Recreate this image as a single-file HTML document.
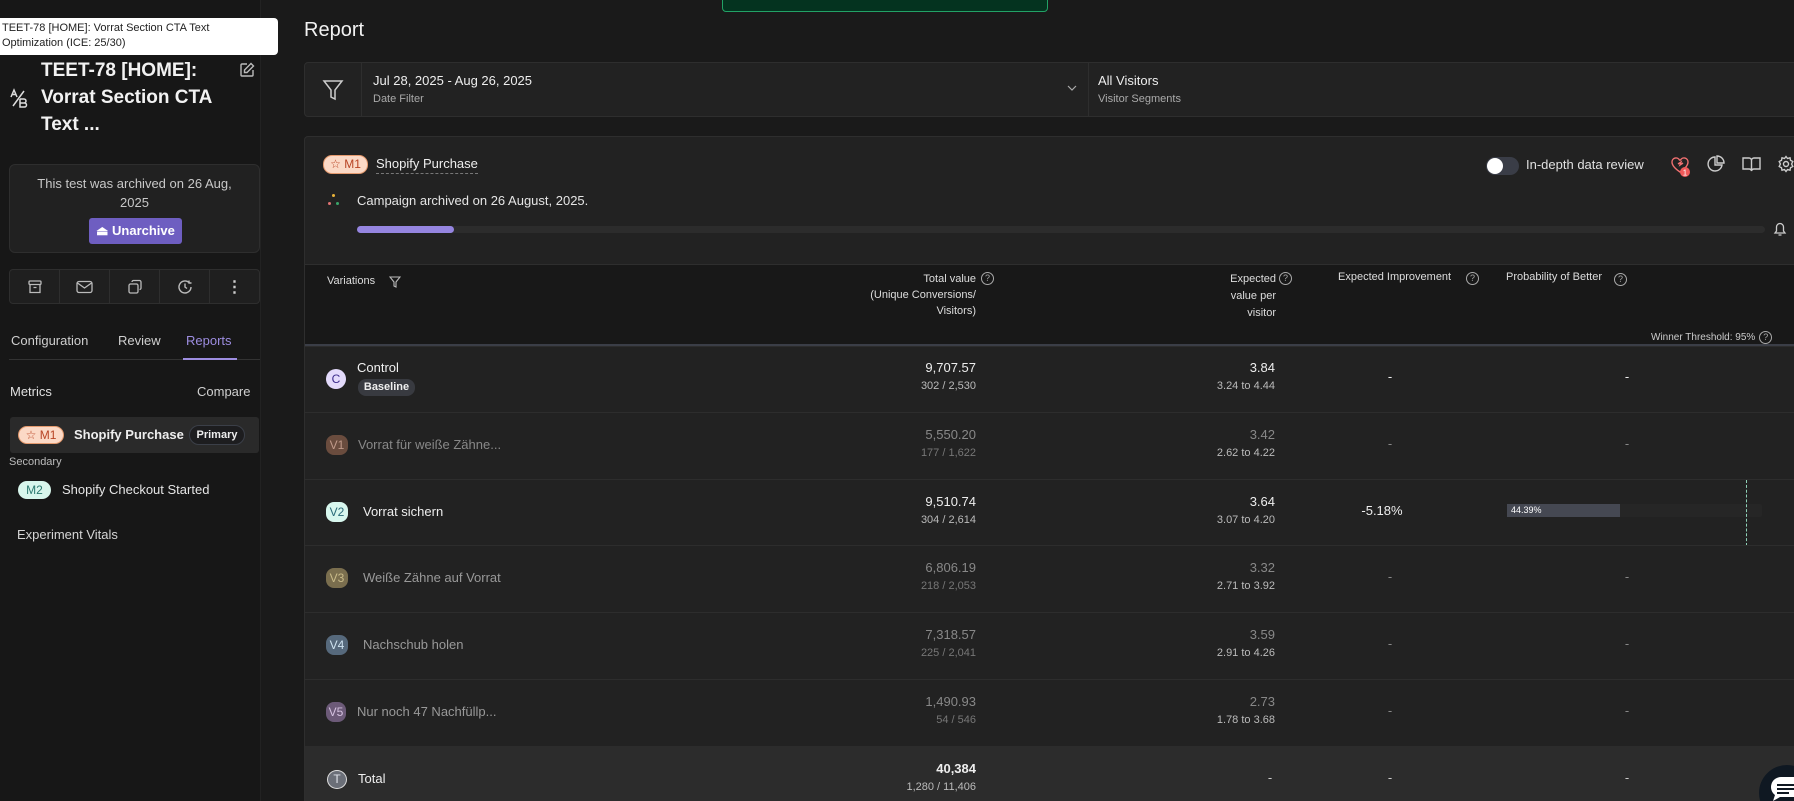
<!DOCTYPE html>
<html><head><meta charset="utf-8"><style>
*{box-sizing:border-box;margin:0;padding:0}
html,body{width:1794px;height:801px;overflow:hidden;background:#1a1a1a;font-family:"Liberation Sans",sans-serif;color:#e8e8e8}
#root{position:relative;width:1794px;height:801px;overflow:hidden}
.a{position:absolute}
.side{position:absolute;left:0;top:0;width:261px;height:801px;background:#171717;border-right:1px solid #222}
.t{white-space:nowrap}
.badge{position:absolute;width:22px;height:20px;border-radius:8px;font-size:12px;line-height:20px;text-align:center}
.r{position:absolute;text-align:right;white-space:nowrap}
.c{position:absolute;text-align:center;white-space:nowrap}
.q{display:inline-block;width:13px;height:13px;border:1px solid #aaa;border-radius:50%;font-size:9px;line-height:11px;text-align:center;color:#aaa;vertical-align:middle;margin-left:4px}
.qa{position:absolute;width:13px;height:13px;border:1px solid #aaa;border-radius:50%;font-size:9px;line-height:11px;text-align:center;color:#aaa}
.row{position:absolute;left:305px;width:1489px;height:67px;border-top:1px solid #2d2d2d;background:#222}
</style></head><body><div id="root">

<!-- SIDEBAR -->
<div class="side">
  <div class="a t" style="left:41px;top:57px;font-size:19px;font-weight:bold;line-height:27px;color:#f2f2f2">TEET-78 [HOME]:<br>Vorrat Section CTA<br>Text ...</div>
  <svg class="a" style="left:9px;top:88px" width="20" height="20" viewBox="0 0 20 20" fill="none" stroke="#ddd" stroke-width="1.5"><path d="M2 9 L5 2 L8 9 M3 6.5h4 M15 3 L4 18 M11 11h4a2 2 0 010 4h-4v-4 M11 15h4.5a2 2 0 010 4H11v-4"/></svg>
  <svg class="a" style="left:239px;top:62px" width="16" height="16" viewBox="0 0 16 16" fill="none" stroke="#bbb" stroke-width="1.4"><path d="M8 2H3a1 1 0 00-1 1v10a1 1 0 001 1h10a1 1 0 001-1V8 M12 1.5l2.5 2.5L8 10.5H5.5V8z"/></svg>

  <div class="a" style="left:9px;top:164px;width:251px;height:89px;background:#212121;border:1px solid #2e2e2e;border-radius:6px">
    <div class="c" style="left:0;width:249px;top:9px;font-size:13px;line-height:19px;color:#c8c8c8;white-space:normal;padding:0 18px">This test was archived on 26 Aug, 2025</div>
    <div class="a" style="left:79px;top:53px;width:93px;height:26px;background:#6e5ec1;border-radius:3px;font-size:13px;font-weight:bold;line-height:26px;color:#fff;text-align:center">⏏ Unarchive</div>
  </div>

  <div class="a" style="left:9px;top:269px;width:251px;height:35px;background:#1f1f1f;border:1px solid #2e2e2e;border-radius:4px;display:flex">
    <div style="flex:1;border-right:1px solid #2e2e2e;display:flex;align-items:center;justify-content:center"><svg width="16" height="16" viewBox="0 0 16 16" fill="none" stroke="#bbb" stroke-width="1.3"><rect x="2" y="2" width="12" height="3.5" rx="1"/><path d="M3 5.5v8h10v-8 M6.5 8.5h3"/></svg></div>
    <div style="flex:1;border-right:1px solid #2e2e2e;display:flex;align-items:center;justify-content:center"><svg width="17" height="14" viewBox="0 0 17 14" fill="none" stroke="#bbb" stroke-width="1.3"><rect x="1" y="1.5" width="15" height="11" rx="2"/><path d="M1.5 3l7 5 7-5"/></svg></div>
    <div style="flex:1;border-right:1px solid #2e2e2e;display:flex;align-items:center;justify-content:center"><svg width="16" height="16" viewBox="0 0 16 16" fill="none" stroke="#bbb" stroke-width="1.3"><rect x="2" y="5" width="9" height="9" rx="1.5"/><path d="M5 3a1.5 1.5 0 011.5-1.5h6A1.5 1.5 0 0114 3v6a1.5 1.5 0 01-1.5 1.5"/></svg></div>
    <div style="flex:1;border-right:1px solid #2e2e2e;display:flex;align-items:center;justify-content:center"><svg width="16" height="16" viewBox="0 0 16 16" fill="none" stroke="#bbb" stroke-width="1.4"><path d="M14 8a6 6 0 11-2-4.5 M8 4.5V8l2 1.5 M12 1.5v2.5h2.5"/></svg></div>
    <div style="flex:1;display:flex;align-items:center;justify-content:center;color:#ccc;font-size:16px;font-weight:bold">⋮</div>
  </div>

  <div class="a t" style="left:11px;top:333px;font-size:13px;color:#cfcfcf">Configuration</div>
  <div class="a t" style="left:118px;top:333px;font-size:13px;color:#cfcfcf">Review</div>
  <div class="a t" style="left:186px;top:333px;font-size:13px;color:#9d8de0">Reports</div>
  <div class="a" style="left:9px;top:359px;width:251px;height:1px;background:#333"></div>
  <div class="a" style="left:183px;top:358px;width:54px;height:2px;background:#9d8de0"></div>

  <div class="a t" style="left:10px;top:384px;font-size:13px;color:#e0e0e0">Metrics</div>
  <div class="a t" style="left:197px;top:384px;font-size:13px;color:#d0d0d0">Compare</div>

  <div class="a" style="left:10px;top:417px;width:249px;height:36px;background:#2a2a2a;border-radius:3px"></div>
  <div class="a t" style="left:18px;top:426px;width:46px;height:18px;border-radius:9px;background:#fbd9c6;border:1px solid #e59a6e;color:#b84424;font-size:12px;line-height:16px;text-align:center">☆ M1</div>
  <div class="a t" style="left:74px;top:426px;font-size:13px;font-weight:bold;color:#eee;line-height:18px">Shopify Purchase</div>
  <div class="a t" style="left:189px;top:425px;width:56px;height:20px;border-radius:10px;border:1px solid #3b3f48;background:#1d1d1f;color:#eee;font-size:11px;font-weight:bold;line-height:18px;text-align:center">Primary</div>

  <div class="a t" style="left:9px;top:456px;font-size:11px;color:#bbb">Secondary</div>
  <div class="a t" style="left:18px;top:481px;width:33px;height:18px;border-radius:9px;background:#d8f6ec;color:#2c7a70;font-size:12px;line-height:18px;text-align:center">M2</div>
  <div class="a t" style="left:62px;top:481px;font-size:13px;color:#e5e5e5;line-height:18px">Shopify Checkout Started</div>
  <div class="a t" style="left:17px;top:527px;font-size:13px;color:#d5d5d5">Experiment Vitals</div>
</div>

<!-- tooltip -->
<div class="a" style="left:0;top:18px;width:278px;height:37px;background:#fff;border-radius:0 4px 4px 0;color:#222;font-size:11px;line-height:15px;padding:3px 2px">TEET-78 [HOME]: Vorrat Section CTA Text<br>Optimization (ICE: 25/30)</div>

<!-- toast -->
<div class="a" style="left:722px;top:-4px;width:326px;height:16px;background:#04331f;border:1px solid #22a266;border-radius:4px"></div>

<!-- main -->
<div class="a t" style="left:304px;top:19px;font-size:20px;color:#f2f2f2">Report</div>

<div class="a" style="left:304px;top:62px;width:1500px;height:55px;background:#222;border:1px solid #2e2e2e;border-radius:4px"></div>
<div class="a" style="left:361px;top:63px;width:1px;height:53px;background:#2e2e2e"></div>
<div class="a" style="left:1088px;top:63px;width:1px;height:53px;background:#2e2e2e"></div>
<svg class="a" style="left:322px;top:79px" width="22" height="22" viewBox="0 0 22 22" fill="none" stroke="#ccc" stroke-width="1.5"><path d="M2 2h18l-7 9v9l-4-2v-7z"/></svg>
<div class="a t" style="left:373px;top:73px;font-size:13px;color:#eee">Jul 28, 2025 - Aug 26, 2025</div>
<div class="a t" style="left:373px;top:93px;font-size:11px;color:#aaa">Date Filter</div>
<svg class="a" style="left:1067px;top:85px" width="10" height="7" viewBox="0 0 10 7" fill="none" stroke="#aaa" stroke-width="1.2"><path d="M1 1l4 4 4-4"/></svg>
<div class="a t" style="left:1098px;top:73px;font-size:13px;color:#eee">All Visitors</div>
<div class="a t" style="left:1098px;top:93px;font-size:11px;color:#aaa">Visitor Segments</div>

<!-- card -->
<div class="a" style="left:304px;top:136px;width:1500px;height:665px;background:#222;border:1px solid #2e2e2e;border-bottom:none;border-radius:4px 4px 0 0"></div>
<div class="a t" style="left:323px;top:155px;width:45px;height:19px;border-radius:9px;background:#fbd9c6;border:1px solid #e59a6e;color:#b84424;font-size:12px;line-height:17px;text-align:center">☆ M1</div>
<div class="a t" style="left:376px;top:155px;font-size:13px;color:#eee;line-height:18px;border-bottom:1px dashed #777">Shopify Purchase</div>

<div class="a" style="left:1486px;top:157px;width:33px;height:18px;border-radius:9px;background:#3a3d47"></div>
<div class="a" style="left:1487px;top:158px;width:16px;height:16px;border-radius:50%;background:#fff"></div>
<div class="a t" style="left:1526px;top:157px;font-size:13px;color:#e0e0e0">In-depth data review</div>
<svg class="a" style="left:1670px;top:155px" width="22" height="24" viewBox="0 0 22 24" fill="none" stroke="#f07070" stroke-width="1.4"><path d="M10 17C4 13 2 10 2 7a4 4 0 017.5-2h1A4 4 0 0118 7c0 3-2 6-8 10z M8 9l3-2-1 3 3-2"/><circle cx="15" cy="17" r="5" fill="#f05a5a" stroke="none"/><text x="15" y="20.5" font-size="8" fill="#fff" stroke="none" text-anchor="middle" font-family="Liberation Sans">1</text></svg>
<svg class="a" style="left:1707px;top:155px" width="18" height="18" viewBox="0 0 18 18" fill="none" stroke="#ccc" stroke-width="1.4"><path d="M8 2a7 7 0 107 8H8z M10 1v7h7a7 7 0 00-7-7z"/></svg>
<svg class="a" style="left:1742px;top:156px" width="19" height="16" viewBox="0 0 19 16" fill="none" stroke="#ccc" stroke-width="1.4"><path d="M9.5 3v12 M1 2h6a2.5 2.5 0 012.5 2.5A2.5 2.5 0 0112 2h6v11h-6a2.5 2.5 0 00-2.5 2 2.5 2.5 0 00-2.5-2H1z"/></svg>
<svg class="a" style="left:1777px;top:155px" width="18" height="18" viewBox="0 0 18 18" fill="none" stroke="#ccc" stroke-width="1.4"><circle cx="9" cy="9" r="2.5"/><path d="M9 1.5l1.5 2 2.5-.7.5 2.5 2.3 1.2-1.2 2.5 1.2 2.5-2.3 1.2-.5 2.5-2.5-.7L9 16.5l-1.5-2-2.5.7-.5-2.5-2.3-1.2L3.4 9 2.2 6.5l2.3-1.2.5-2.5 2.5.7z"/></svg>

<div class="a" style="left:332px;top:194px;width:3px;height:3px;border-radius:50%;background:#e8b23a"></div>
<div class="a" style="left:328px;top:202px;width:3px;height:3px;border-radius:50%;background:#e07272"></div>
<div class="a" style="left:336px;top:202px;width:3px;height:3px;border-radius:50%;background:#3aa56a"></div>
<div class="a t" style="left:357px;top:193px;font-size:13px;color:#e5e5e5">Campaign archived on 26 August, 2025.</div>
<div class="a" style="left:357px;top:226px;width:1408px;height:7px;border-radius:4px;background:#2c2c2c"></div>
<div class="a" style="left:357px;top:226px;width:97px;height:7px;border-radius:4px;background:#9585e0"></div>
<svg class="a" style="left:1773px;top:221px" width="14" height="16" viewBox="0 0 14 16" fill="none" stroke="#ccc" stroke-width="1.3"><path d="M2 12h10l-1.5-2V6a3.5 3.5 0 00-7 0v4z M5.5 14h3"/></svg>

<!-- table header -->
<div class="a" style="left:305px;top:264px;width:1489px;height:81px;background:#181818;border-top:1px solid #2e2e2e"></div>
<div class="a" style="left:305px;top:344px;width:1489px;height:2px;background:#3b3e47"></div>
<div class="a t" style="left:327px;top:275px;font-size:11px;color:#ddd">Variations</div>
<svg class="a" style="left:389px;top:276px" width="12" height="12" viewBox="0 0 12 12" fill="none" stroke="#bbb" stroke-width="1.1"><path d="M1 1h10L7 6v5L5 10V6z"/></svg>
<div class="r" style="left:776px;width:200px;top:271px;font-size:11px;line-height:16px;color:#ddd">Total value<br>(Unique Conversions/<br>Visitors)</div>
<div class="qa" style="left:981px;top:272px">?</div>
<div class="r" style="left:1076px;width:200px;top:271px;font-size:11px;line-height:17px;color:#ddd">Expected<br>value per<br>visitor</div>
<div class="qa" style="left:1279px;top:272px">?</div>
<div class="a t" style="left:1338px;top:271px;font-size:11px;color:#ddd">Expected Improvement</div>
<div class="qa" style="left:1466px;top:272px">?</div>
<div class="a t" style="left:1506px;top:271px;font-size:11px;color:#ddd">Probability of Better</div>
<div class="qa" style="left:1614px;top:273px">?</div>
<div class="a t" style="left:1651px;top:331px;font-size:10px;color:#ccc">Winner Threshold: 95%<span class="q">?</span></div>

<!-- rows -->
<div class="row" style="top:346px"></div>
<div class="badge" style="left:326px;top:369px;width:20px;background:#e3dafb;color:#3c2c8c;border-radius:50%">C</div>
<div class="a t" style="left:357px;top:360px;font-size:13px;color:#f0f0f0">Control</div>
<div class="a t" style="left:358px;top:379px;width:57px;height:17px;border-radius:8px;background:#383a40;font-size:11px;font-weight:bold;line-height:17px;text-align:center;color:#eee">Baseline</div>
<div class="r" style="left:776px;width:200px;top:360px;font-size:13px;color:#eee">9,707.57</div>
<div class="r" style="left:776px;width:200px;top:380px;font-size:11px;color:#bbb">302 / 2,530</div>
<div class="r" style="left:1075px;width:200px;top:360px;font-size:13px;color:#eee">3.84</div>
<div class="r" style="left:1075px;width:200px;top:380px;font-size:11px;color:#bbb">3.24 to 4.44</div>
<div class="c" style="left:1370px;width:40px;top:369px;font-size:13px;color:#eee">-</div>
<div class="c" style="left:1607px;width:40px;top:369px;font-size:13px;color:#eee">-</div>

<div class="row" style="top:412px"></div>
<div class="badge" style="left:326px;top:435px;background:#6a4c3e;color:#c09a8a">V1</div>
<div class="a t" style="left:358px;top:437px;font-size:13px;color:#888">Vorrat für weiße Zähne...</div>
<div class="r" style="left:776px;width:200px;top:427px;font-size:13px;color:#888">5,550.20</div>
<div class="r" style="left:776px;width:200px;top:447px;font-size:11px;color:#777">177 / 1,622</div>
<div class="r" style="left:1075px;width:200px;top:427px;font-size:13px;color:#888">3.42</div>
<div class="r" style="left:1075px;width:200px;top:447px;font-size:11px;color:#bbb">2.62 to 4.22</div>
<div class="c" style="left:1370px;width:40px;top:436px;font-size:13px;color:#888">-</div>
<div class="c" style="left:1607px;width:40px;top:436px;font-size:13px;color:#888">-</div>

<div class="row" style="top:479px"></div>
<div class="badge" style="left:326px;top:502px;background:#d8f7ee;color:#2a6a78">V2</div>
<div class="a t" style="left:363px;top:504px;font-size:13px;color:#eee">Vorrat sichern</div>
<div class="r" style="left:776px;width:200px;top:494px;font-size:13px;color:#eee">9,510.74</div>
<div class="r" style="left:776px;width:200px;top:514px;font-size:11px;color:#bbb">304 / 2,614</div>
<div class="r" style="left:1075px;width:200px;top:494px;font-size:13px;color:#eee">3.64</div>
<div class="r" style="left:1075px;width:200px;top:514px;font-size:11px;color:#bbb">3.07 to 4.20</div>
<div class="c" style="left:1352px;width:60px;top:503px;font-size:13px;color:#eee">-5.18%</div>
<div class="a" style="left:1507px;top:504px;width:255px;height:13px;background:#262626;border-radius:2px"></div>
<div class="a t" style="left:1507px;top:504px;width:113px;height:13px;background:#454852;font-size:9px;line-height:13px;color:#fff;padding-left:4px">44.39%</div>
<div class="a" style="left:1746px;top:480px;width:0;height:66px;border-left:1px dashed #8fd1b8"></div>

<div class="row" style="top:545px"></div>
<div class="badge" style="left:326px;top:568px;background:#7a6e4e;color:#c9bb8a">V3</div>
<div class="a t" style="left:363px;top:570px;font-size:13px;color:#999">Weiße Zähne auf Vorrat</div>
<div class="r" style="left:776px;width:200px;top:560px;font-size:13px;color:#888">6,806.19</div>
<div class="r" style="left:776px;width:200px;top:580px;font-size:11px;color:#777">218 / 2,053</div>
<div class="r" style="left:1075px;width:200px;top:560px;font-size:13px;color:#888">3.32</div>
<div class="r" style="left:1075px;width:200px;top:580px;font-size:11px;color:#bbb">2.71 to 3.92</div>
<div class="c" style="left:1370px;width:40px;top:569px;font-size:13px;color:#888">-</div>
<div class="c" style="left:1607px;width:40px;top:569px;font-size:13px;color:#888">-</div>

<div class="row" style="top:612px"></div>
<div class="badge" style="left:326px;top:635px;background:#56697c;color:#cfe3f0">V4</div>
<div class="a t" style="left:363px;top:637px;font-size:13px;color:#999">Nachschub holen</div>
<div class="r" style="left:776px;width:200px;top:627px;font-size:13px;color:#888">7,318.57</div>
<div class="r" style="left:776px;width:200px;top:647px;font-size:11px;color:#777">225 / 2,041</div>
<div class="r" style="left:1075px;width:200px;top:627px;font-size:13px;color:#888">3.59</div>
<div class="r" style="left:1075px;width:200px;top:647px;font-size:11px;color:#bbb">2.91 to 4.26</div>
<div class="c" style="left:1370px;width:40px;top:636px;font-size:13px;color:#888">-</div>
<div class="c" style="left:1607px;width:40px;top:636px;font-size:13px;color:#888">-</div>

<div class="row" style="top:679px"></div>
<div class="badge" style="left:326px;top:702px;width:20px;background:#6c5a78;color:#d5c2e0">V5</div>
<div class="a t" style="left:357px;top:704px;font-size:13px;color:#999">Nur noch 47 Nachfüllp...</div>
<div class="r" style="left:776px;width:200px;top:694px;font-size:13px;color:#888">1,490.93</div>
<div class="r" style="left:776px;width:200px;top:714px;font-size:11px;color:#777">54 / 546</div>
<div class="r" style="left:1075px;width:200px;top:694px;font-size:13px;color:#888">2.73</div>
<div class="r" style="left:1075px;width:200px;top:714px;font-size:11px;color:#bbb">1.78 to 3.68</div>
<div class="c" style="left:1370px;width:40px;top:703px;font-size:13px;color:#888">-</div>
<div class="c" style="left:1607px;width:40px;top:703px;font-size:13px;color:#888">-</div>

<div class="row" style="top:746px;height:55px;background:#2c2c2c;border-top:none"></div>
<div class="badge" style="left:327px;top:770px;width:20px;height:19px;background:#6b6f78;color:#dfe2ea;border:1px solid #ddd;border-radius:50%;line-height:17px">T</div>
<div class="a t" style="left:358px;top:771px;font-size:13px;color:#eee">Total</div>
<div class="r" style="left:776px;width:200px;top:761px;font-size:13px;font-weight:bold;color:#eee">40,384</div>
<div class="r" style="left:776px;width:200px;top:781px;font-size:11px;color:#bbb">1,280 / 11,406</div>
<div class="c" style="left:1250px;width:40px;top:770px;font-size:13px;color:#ccc">-</div>
<div class="c" style="left:1370px;width:40px;top:770px;font-size:13px;color:#ccc">-</div>
<div class="c" style="left:1607px;width:40px;top:770px;font-size:13px;color:#ccc">-</div>

<!-- chat bubble -->
<div class="a" style="left:1759px;top:765px;width:56px;height:56px;border-radius:50%;background:#0f1822"></div>
<svg class="a" style="left:1768px;top:775px" width="30" height="26" viewBox="0 0 30 26"><path d="M13 2h14a3 3 0 013 3v14a3 3 0 01-3 3H12l-7 4 2-6a10 10 0 016-18z" fill="#fff"/><path d="M9 10h17M9 14h17M9 18h12" stroke="#0f1822" stroke-width="2"/></svg>
</div></body></html>
